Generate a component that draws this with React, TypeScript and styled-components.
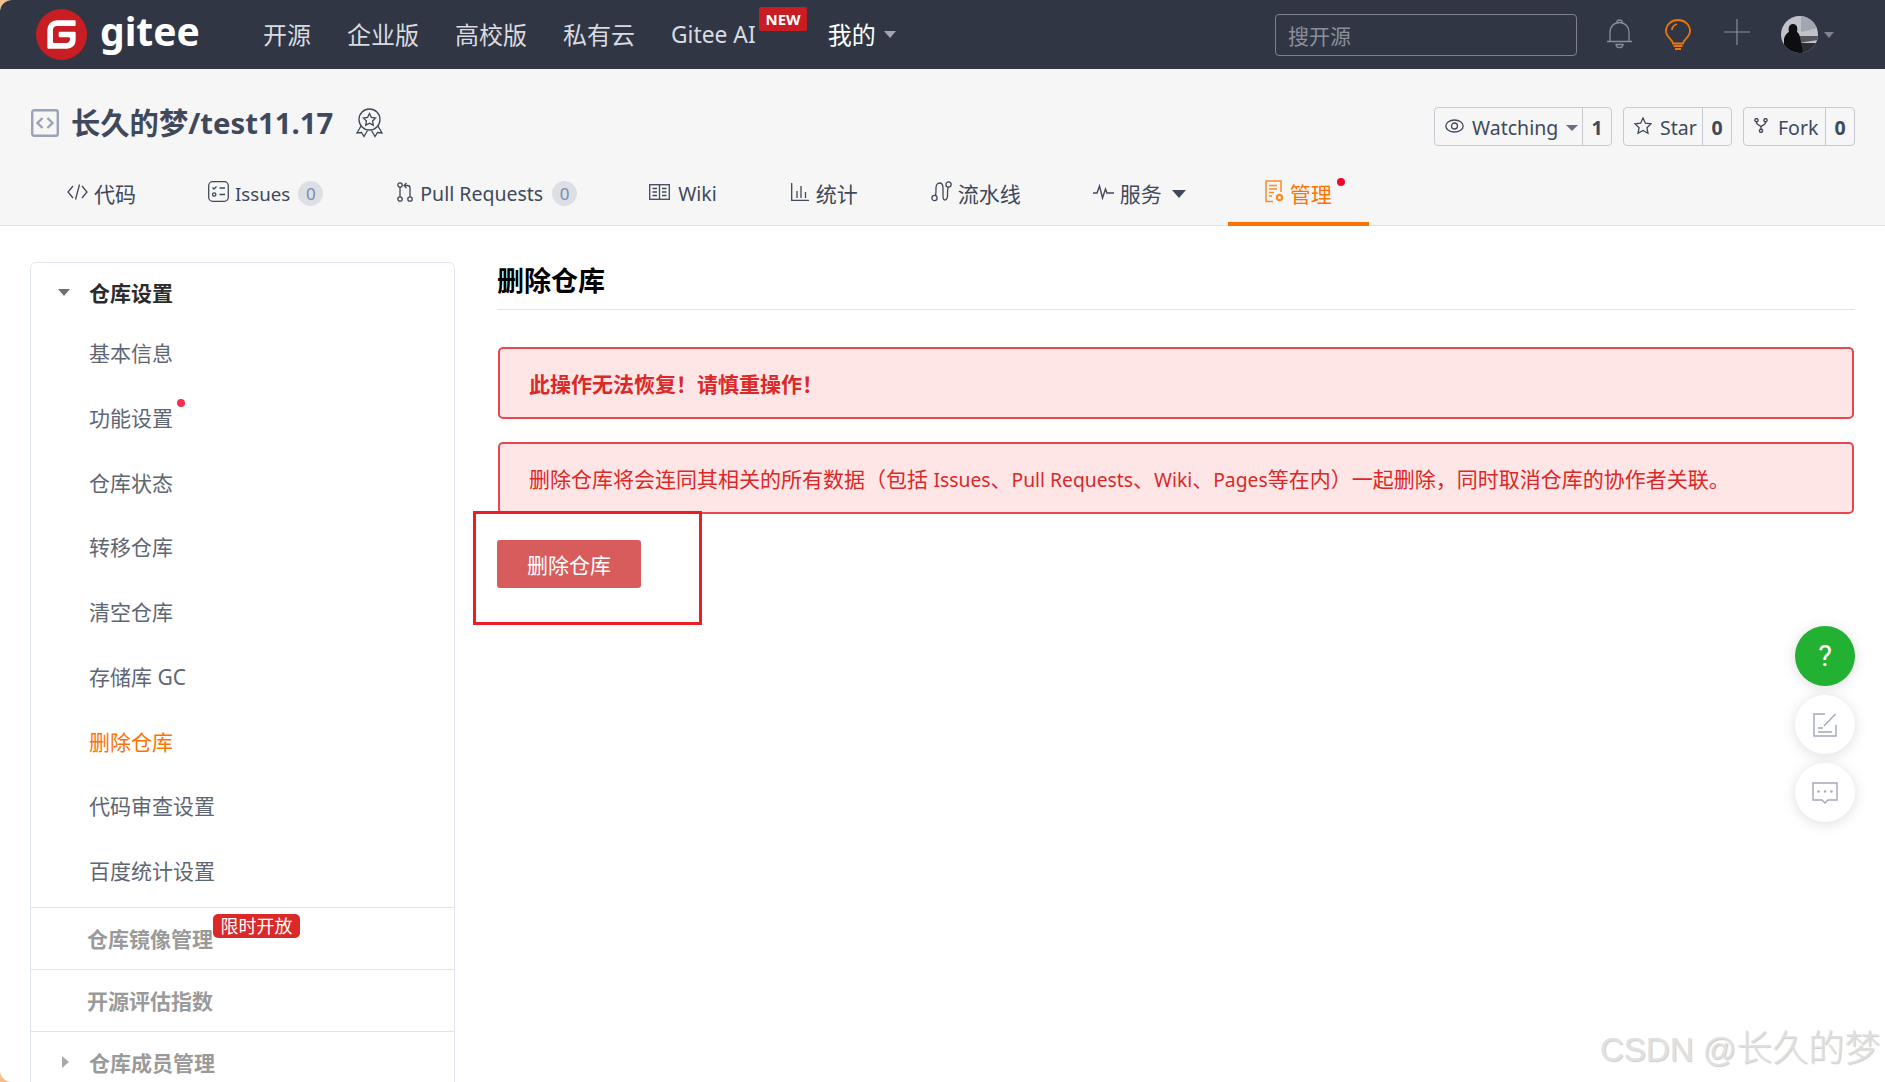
import React from "react";
import styled, { createGlobalStyle } from "styled-components";

const GlobalStyle = createGlobalStyle`
  html, body {
    margin: 0;
    padding: 0;
    background: #f2c08d;
  }
  * { box-sizing: border-box; }
`;

const Page = styled.div`
  position: relative;
  width: 1885px;
  height: 1082px;
  overflow: hidden;
  background: #fff;
  border-radius: 12px 0 0 12px;
  font-family: "Noto Sans", "Noto Sans CJK SC", sans-serif;
  font-size: 21px;
`;

const TopBar = styled.header`
  display: flex;
  align-items: center;
  height: 69px;
  padding: 0 51px 0 36px;
  background: #303644;
`;

const Logo = styled.a`
  display: flex;
  flex: none;
  align-items: center;
  gap: 13px;
  width: 161px;
  height: 51px;
  color: #fff;
  font-family: "Noto Sans", sans-serif;
  font-weight: 700;
  font-size: 39px;
  line-height: 40px;
  svg { flex: none; }
  span { margin-top: -8px; }
`;

const Nav = styled.nav`
  display: flex;
  align-items: center;
  gap: 36px;
  margin-left: 66px;
`;

const NavItem = styled.a<{ $me?: boolean; $latin?: boolean }>`
  position: relative;
  display: flex;
  align-items: center;
  gap: 8px;
  margin-left: ${(p) => (p.$me ? "36px" : "0")};
  color: ${(p) => (p.$me ? "#fff" : "#d9dbe0")};
  font-size: ${(p) => (p.$latin ? "22.8px" : "24px")};
  line-height: 34px;
`;

const NewBadge = styled.b`
  position: absolute;
  left: 88px;
  top: -11px;
  width: 48px;
  height: 24px;
  background: #c71d23;
  border-radius: 2px;
  color: #fff;
  font-size: 15px;
  line-height: 24px;
  text-align: center;
`;

const Caret = styled.i<{ $w: number; $h: number; $color: string }>`
  display: block;
  flex: none;
  border-style: solid;
  border-width: ${(p) => `${p.$h}px ${p.$w / 2}px 0`};
  border-color: ${(p) => p.$color} transparent transparent;
`;

const SideCaret = styled.i`
  display: block;
  flex: none;
  margin-left: 1px;
  border-style: solid;
  border-width: 6px 0 6px 7px;
  border-color: transparent transparent transparent #a8a8a8;
`;

const TopRight = styled.div`
  display: flex;
  align-items: center;
  margin-left: auto;
`;

const Search = styled.div`
  display: flex;
  align-items: center;
  width: 302px;
  height: 42px;
  padding-left: 12px;
  border: 1px solid #7d828e;
  border-radius: 4px;
  color: #8b8f9a;
  font-size: 21px;
`;

const BarIcon = styled.a<{ $left: number }>`
  display: block;
  flex: none;
  height: 31px;
  margin-left: ${(p) => p.$left}px;
  svg { display: block; }
`;

const AvatarWrap = styled.a`
  display: flex;
  align-items: center;
  gap: 6px;
  margin-left: 31px;
`;

const RepoHead = styled.section`
  height: 157px;
  padding-top: 38px;
  background: #f6f6f6;
  border-bottom: 1px solid #e2e2e2;
`;

const RepoRow = styled.div`
  display: flex;
  align-items: center;
  height: 39px;
  padding: 0 30px 0 31px;
`;

const RepoTitle = styled.h1`
  display: flex;
  align-items: center;
  margin: 0 0 7px;
  color: #40485b;
  font-size: 29.3px;
  font-weight: 700;
  line-height: 40px;
  white-space: nowrap;
`;

const RepoName = styled.span`
  margin: 0 23px 0 12px;
`;

const RepoActions = styled.div`
  display: flex;
  gap: 11px;
  margin-left: auto;
`;

const ActionBox = styled.div<{ $width: number }>`
  display: flex;
  width: ${(p) => p.$width}px;
  height: 39px;
  border: 1px solid #c8c9d3;
  border-radius: 4px;
  color: #40485b;
  font-size: 19.5px;
  line-height: 37px;
`;

const ActionMain = styled.a<{ $gap?: number }>`
  display: flex;
  flex: 1;
  align-items: center;
  padding: 2px 0 0 10px;
  gap: ${(p) => p.$gap ?? 8}px;
`;

const ActionCount = styled.b`
  flex: none;
  width: 29px;
  border-left: 1px solid #c8c9d3;
  line-height: 39px;
  text-align: center;
`;

const Tabs = styled.nav`
  display: flex;
  height: 56px;
  margin-top: 24px;
  padding-left: 31px;
`;

const Tab = styled.a<{ $active?: boolean; $gap?: number; $right?: number }>`
  position: relative;
  display: flex;
  align-items: center;
  gap: ${(p) => p.$gap ?? 6}px;
  height: 56px;
  padding: 0 ${(p) => p.$right ?? 36}px 5px ${(p) => (p.$active ? 37 : 36)}px;
  margin-left: ${(p) => (p.$active ? "6px" : "0")};
  border-bottom: 4px solid ${(p) => (p.$active ? "#fe7300" : "transparent")};
  color: ${(p) => (p.$active ? "#fe7300" : "#40485b")};
  line-height: 30px;
  white-space: nowrap;
  svg { flex: none; margin-bottom: 4px; }
  i { margin-left: 4px; }
`;

const TabText = styled.span<{ $size?: number }>`
  font-size: ${(p) => p.$size ?? 21}px;
`;

const CountBadge = styled.span`
  width: 25px;
  height: 25px;
  margin-left: 2px;
  border-radius: 50%;
  background: #dcdfe4;
  color: #7a8bb0;
  font-size: 17px;
  line-height: 25px;
  text-align: center;
`;

const NoticeDot = styled.em`
  position: absolute;
  width: 8px;
  height: 8px;
  border-radius: 50%;
  background: #f5304f;
`;

const TabDot = styled(NoticeDot)`
  right: 24px;
  top: 8px;
  background: #ee0a2b;
`;

const Body = styled.div`
  display: flex;
  align-items: flex-start;
  padding: 36px 30px 0;
`;

const Sidebar = styled.aside`
  flex: none;
  width: 425px;
  height: 830px;
  border: 1px solid #e1e7ee;
  border-radius: 6px;
`;

const SideHead = styled.div`
  display: flex;
  align-items: center;
  height: 58px;
  padding-left: 27px;
  gap: 19px;
  color: #2b2b2b;
  font-weight: 700;
`;

const SideItem = styled.a<{ $active?: boolean }>`
  position: relative;
  display: block;
  height: 64.75px;
  padding-left: 58px;
  color: ${(p) => (p.$active ? "#fe7300" : "#5e6673")};
  line-height: 64.75px;
`;

const ItemDot = styled(NoticeDot)`
  left: 146px;
  top: 13px;
`;

const SideList = styled.div`
  padding-bottom: 3px;
`;

const SideSection = styled.a<{ $left: number }>`
  position: relative;
  display: flex;
  align-items: center;
  gap: 20px;
  height: 62px;
  padding-left: ${(p) => p.$left}px;
  border-top: 1px solid #e1e4ea;
  color: #9a9a9a;
  font-weight: 700;
`;

const LimitedBadge = styled.span`
  position: absolute;
  left: 182px;
  top: 6px;
  width: 87px;
  height: 24px;
  background: #db2828;
  border-radius: 5px;
  color: #fff;
  font-size: 18px;
  font-weight: 400;
  line-height: 24px;
  text-align: center;
`;

const Main = styled.main`
  flex: none;
  width: 1358px;
  margin-left: 42px;
`;

const Heading = styled.h2`
  margin: 0;
  height: 48px;
  padding-bottom: 9px;
  border-bottom: 1px solid #e4e4e4;
  color: #000;
  font-size: 27px;
  font-weight: 700;
  line-height: 38px;
`;

const Alert = styled.div<{ $strong?: boolean }>`
  height: 72px;
  margin: ${(p) => (p.$strong ? "37px 1px 23px" : "0 1px")};
  padding-left: 29px;
  border: 2px solid #e8474e;
  border-radius: 5px;
  background: #ffe6e6;
  color: #db2828;
  font-weight: ${(p) => (p.$strong ? 700 : 400)};
  line-height: 70px;
  white-space: nowrap;
`;

const Latin = styled.span`
  font-size: 19.3px;
`;

const ButtonRow = styled.div`
  position: relative;
  width: 144px;
  margin-top: 26px;
`;

const DangerButton = styled.button`
  display: block;
  width: 144px;
  height: 48px;
  padding: 0;
  border: 0;
  border-radius: 3px;
  background: #d95c5c;
  color: #fff;
  font-family: inherit;
  font-size: 21px;
`;

const Annotation = styled.div`
  position: absolute;
  left: -24px;
  top: -29px;
  width: 229px;
  height: 114px;
  border: 3px solid #ee1c25;
`;

const FloatDock = styled.div`
  position: absolute;
  left: 1795px;
  top: 626px;
  display: flex;
  flex-direction: column;
  gap: 9px;
`;

const FloatButton = styled.a<{ $green?: boolean }>`
  display: flex;
  align-items: center;
  justify-content: center;
  width: 60px;
  height: ${(p) => (p.$green ? "60px" : "59px")};
  border-radius: 50%;
  background: ${(p) => (p.$green ? "#22b133" : "#fff")};
  box-shadow: 0 2px 14px rgba(0, 0, 0, 0.13);
  color: #fff;
  font-family: "Roboto", sans-serif;
  font-size: 29px;
  font-weight: 400;
`;

const Watermark = styled.div`
  position: absolute;
  left: 1600px;
  top: 1025px;
  color: #e0e0e0;
  font-family: "Liberation Sans", "Noto Sans CJK SC", sans-serif;
  font-size: 33px;
  line-height: 48px;
  text-shadow: 1px 1px 1px #cccccc;
  white-space: nowrap;
  span { font-size: 36px; font-weight: 300; }
`;

const LogoMark = () => (
  <svg width="51" height="51" viewBox="0 0 24 24">
    <circle cx="12" cy="12" r="11" fill="#fff" />
    <path
      fill="#c71d23"
      fillRule="evenodd"
      d="M12 0a12 12 0 1 0 0 24 12 12 0 0 0 0-24zm6.07 5.33c.33 0 .6.27.6.6v1.48c0 .33-.27.59-.6.59H9.78c-.98 0-1.78.8-1.78 1.78v5.63c0 .33.27.59.59.59h5.63c.98 0 1.78-.8 1.78-1.78v-.3a.59.59 0 0 0-.59-.59h-4.15a.59.59 0 0 1-.59-.59v-1.48c0-.33.27-.59.59-.59h6.82c.33 0 .59.26.59.59v3.41a4 4 0 0 1-4 4H5.93a.59.59 0 0 1-.59-.59V9.78a4.44 4.44 0 0 1 4.44-4.44h8.29z"
    />
  </svg>
);

const BellIcon = () => (
  <svg width="25" height="31" viewBox="0 0 25 31" fill="none" stroke="#8a8f9c" strokeWidth="1.3">
    <path d="M0 22.5h25M3 22.5v-9C3 7.5 7 3.5 12.5 3.5S22 7.5 22 13.5v9" />
    <path d="M10 3.5V2.5c0-2 5-2 5 0v1M9 25.5h7c0 4-7 4-7 0z" />
  </svg>
);

const BulbIcon = () => (
  <svg width="26" height="32" viewBox="0 0 26 32" fill="none" stroke="#f27405" strokeWidth="1.8">
    <path d="M8 24.5c0-4-7-6-7-12.500C1 5.500 6.500 1 13 1s12 4.500 12 11c0 6.500-7 8.500-7 12.500z" />
    <path d="M7 11c0-3 2-5 5-6" />
    <path d="M8.500 27h9M10 30h6" />
  </svg>
);

const PlusIcon = () => (
  <svg width="26" height="26" viewBox="0 0 26 26" stroke="#8a8f9c" strokeWidth="1.2">
    <path d="M0 13h26M13 0v26" />
  </svg>
);

const AvatarImage = () => (
  <svg width="37" height="37" viewBox="0 0 37 37">
    <defs>
      <clipPath id="av">
        <circle cx="18.500" cy="18.500" r="18.500" />
      </clipPath>
    </defs>
    <g clipPath="url(#av)">
      <rect width="37" height="37" fill="#bfc2c8" />
      <path d="M20 0h17v12l-17 4z" fill="#a2a6ae" />
      <path d="M18 20h19v4l-19 3z" fill="#55565a" />
      <path d="M18 27h19v10H18z" fill="#2c2d30" />
      <path d="M3 37V24c0-4 3-7 5-8-1-4 0-8 4-8s5 4 4 8c3 2 3 6 4 10l2 11z" fill="#0e0e10" />
    </g>
  </svg>
);

const RepoIcon = () => (
  <svg width="28" height="28" viewBox="0 0 28 28" fill="none" stroke="#9aa3b5" strokeWidth="2.400">
    <rect x="1.200" y="1.200" width="25.600" height="25.600" rx="2" />
    <path d="M11.500 9l-5 5 5 5M16.500 9l5 5-5 5" />
  </svg>
);

const MedalIcon = () => (
  <svg width="27" height="30" viewBox="0 0 27 30" fill="none" stroke="#40485b" strokeWidth="1.300">
    <circle cx="13.500" cy="11.500" r="10.500" />
    <path d="M13.500 5.500l1.900 3.900 4.200.6-3 3 .7 4.200-3.800-2-3.800 2 .7-4.200-3-3 4.200-.6z" />
    <path d="M5 18l-4 7 4.500-.5 2.500 4 3.500-6M22 18l4 7-4.500-.5-2.500 4-3.500-6" />
  </svg>
);

const EyeIcon = () => (
  <svg width="19" height="14" viewBox="0 0 19 14" fill="none" stroke="#40485b" strokeWidth="1.300" style={{ marginBottom: 3 }}>
    <ellipse cx="9.500" cy="7" rx="8.700" ry="6" />
    <circle cx="9.500" cy="7" r="3" />
  </svg>
);

const StarIcon = () => (
  <svg width="18" height="18" viewBox="0 0 18 18" fill="none" stroke="#40485b" strokeWidth="1.300" style={{ marginBottom: 4 }}>
    <path d="M9 1l2.400 5.200 5.600.7-4.100 3.800 1.100 5.600L9 13.500l-5 2.800 1.100-5.600L1 6.900l5.600-.7z" />
  </svg>
);

const ForkIcon = () => (
  <svg width="14" height="15" viewBox="0 0 14 15" fill="none" stroke="#40485b" strokeWidth="1.400" style={{ marginBottom: 5 }}>
    <circle cx="2.500" cy="2.200" r="1.600" />
    <circle cx="11.500" cy="2.200" r="1.600" />
    <circle cx="7" cy="12.800" r="1.600" />
    <path d="M2.500 3.800v1c0 2.500 4.500 2 4.500 4.500v1.900M11.500 3.800v1c0 2.500-4.500 2-4.500 4.500" />
  </svg>
);

const CodeIcon = () => (
  <svg width="21" height="16" viewBox="0 0 21 16" fill="none" stroke="#40485b" strokeWidth="1.300">
    <path d="M6 2L1 8l5 6M15 2l5 6-5 6M12.500 .5l-4 15" />
  </svg>
);

const IssuesIcon = () => (
  <svg width="21" height="21" viewBox="0 0 21 21" fill="none" stroke="#40485b" strokeWidth="1.300">
    <rect x=".7" y=".7" width="19.600" height="19.600" rx="4" />
    <path d="M4.500 6.500l1.500 1.500 2.500-2.500M11.500 7H17M11.500 13.500H17" />
    <circle cx="6.200" cy="13.500" r="1.700" />
  </svg>
);

const PullIcon = () => (
  <svg width="16" height="20" viewBox="0 0 16 20" fill="none" stroke="#40485b" strokeWidth="1.300">
    <circle cx="3" cy="3" r="2.200" />
    <circle cx="3" cy="17" r="2.200" />
    <circle cx="13" cy="17" r="2.200" />
    <path d="M3 5.200v9.600M13 14.800V6c0-1.500-1-2.500-2.500-2.500H8" />
    <path d="M9.500 1L7 3.500 9.500 6" />
  </svg>
);

const WikiIcon = () => (
  <svg width="21" height="16" viewBox="0 0 21 16" fill="none" stroke="#40485b" strokeWidth="1.300">
    <rect x=".7" y=".7" width="19.600" height="14.600" />
    <path d="M10.500 1v14M3.500 4.500h4.500M3.500 8h4.500M3.500 11.500h4.500M13 4.500h4.500M13 8h4.500M13 11.500h4.500" />
  </svg>
);

const StatsIcon = () => (
  <svg width="18" height="18" viewBox="0 0 18 18" fill="none" stroke="#40485b" strokeWidth="1.300">
    <path d="M.7 0v17.300H18M6 8v7M10 3v12M14.500 9v6" />
  </svg>
);

const PipelineIcon = () => (
  <svg width="21" height="21" viewBox="0 0 21 21" fill="none" stroke="#40485b" strokeWidth="1.300">
    <circle cx="3.500" cy="17" r="2.600" />
    <circle cx="17.500" cy="3.500" r="2.600" />
    <path d="M4.500 14.500C5 13 5 10 5 7c0-3 1.500-5 3.500-5S12 4 12 7v8c0 2.500 1 4 2 4s2.500-1.500 2.500-4c0-3 0-6 .5-9" />
  </svg>
);

const ServiceIcon = () => (
  <svg width="21" height="16" viewBox="0 0 21 16" fill="none" stroke="#40485b" strokeWidth="1.400">
    <path d="M0 9h4l2.500-7 3 12 3-9 1.500 4h7" />
  </svg>
);

const ManageIcon = () => (
  <svg width="19" height="23" viewBox="0 0 19 23" fill="none" stroke="#fe8a2a" strokeWidth="1.500">
    <path d="M8 21.500H1V1h15v11" />
    <path d="M4 5.500h8M4 9h8M4 12.500h5M4 16h3" />
    <circle cx="14.500" cy="17.500" r="2.600" strokeWidth="2.200" />
  </svg>
);

const EditIcon = () => (
  <svg width="24" height="24" viewBox="0 0 24 24" fill="none" stroke="#a1a6bb" strokeWidth="1.400">
    <path d="M12 1H1v22h22V12" />
    <path d="M11 13L22.500 1M5 15h5M5 19h14" />
  </svg>
);

const MessageIcon = () => (
  <svg width="26" height="22" viewBox="0 0 26 22" fill="none" stroke="#a1a6bb" strokeWidth="1.400">
    <path d="M1 1h24v17h-9l-3 3-3-3H1z" />
    <circle cx="6.500" cy="9.500" r="1.200" fill="#a1a6bb" stroke="none" />
    <circle cx="13" cy="9.500" r="1.200" fill="#a1a6bb" stroke="none" />
    <circle cx="19.500" cy="9.500" r="1.200" fill="#a1a6bb" stroke="none" />
  </svg>
);

const settingItems = ["基本信息", "功能设置", "仓库状态", "转移仓库", "清空仓库", "存储库 GC", "删除仓库", "代码审查设置", "百度统计设置"];

const App = () => (
  <Page>
    <GlobalStyle />
    <TopBar>
      <Logo>
        <LogoMark />
        <span>gitee</span>
      </Logo>
      <Nav>
        <NavItem>开源</NavItem>
        <NavItem>企业版</NavItem>
        <NavItem>高校版</NavItem>
        <NavItem>私有云</NavItem>
        <NavItem $latin>
          Gitee AI
          <NewBadge>NEW</NewBadge>
        </NavItem>
        <NavItem $me>
          我的
          <Caret $w={13} $h={7} $color="#a3a6ae" />
        </NavItem>
      </Nav>
      <TopRight>
        <Search>搜开源</Search>
        <BarIcon $left={30}><BellIcon /></BarIcon>
        <BarIcon $left={33}><BulbIcon /></BarIcon>
        <BarIcon $left={33}><PlusIcon /></BarIcon>
        <AvatarWrap>
          <AvatarImage />
          <Caret $w={11} $h={6} $color="#7f838e" />
        </AvatarWrap>
      </TopRight>
    </TopBar>

    <RepoHead>
      <RepoRow>
        <RepoTitle>
          <RepoIcon />
          <RepoName>长久的梦/test11.17</RepoName>
          <MedalIcon />
        </RepoTitle>
        <RepoActions>
          <ActionBox $width={178}>
            <ActionMain>
              <EyeIcon />
              Watching
              <Caret $w={12} $h={6} $color="#6b7080" />
            </ActionMain>
            <ActionCount>1</ActionCount>
          </ActionBox>
          <ActionBox $width={109}>
            <ActionMain>
              <StarIcon />
              Star
            </ActionMain>
            <ActionCount>0</ActionCount>
          </ActionBox>
          <ActionBox $width={112}>
            <ActionMain $gap={10}>
              <ForkIcon />
              Fork
            </ActionMain>
            <ActionCount>0</ActionCount>
          </ActionBox>
        </RepoActions>
      </RepoRow>
      <Tabs>
        <Tab><CodeIcon /><TabText>代码</TabText></Tab>
        <Tab $right={38}><IssuesIcon /><TabText $size={18.7}>Issues</TabText><CountBadge>0</CountBadge></Tab>
        <Tab $gap={7}><PullIcon /><TabText $size={19.5}>Pull Requests</TabText><CountBadge>0</CountBadge></Tab>
        <Tab $gap={8} $right={38}><WikiIcon /><TabText $size={19.5}>Wiki</TabText></Tab>
        <Tab $gap={7} $right={37}><StatsIcon /><TabText>统计</TabText></Tab>
        <Tab><PipelineIcon /><TabText>流水线</TabText></Tab>
        <Tab><ServiceIcon /><TabText>服务</TabText><Caret $w={14} $h={8} $color="#40485b" /></Tab>
        <Tab $active $right={37}><ManageIcon /><TabText>管理</TabText><TabDot /></Tab>
      </Tabs>
    </RepoHead>

    <Body>
      <Sidebar>
        <SideHead>
          <Caret $w={13} $h={7} $color="#6f6f6f" />
          仓库设置
        </SideHead>
        <SideList>
          {settingItems.map((item) => (
            <SideItem key={item} $active={item === "删除仓库"}>
              {item}
              {item === "功能设置" && <ItemDot />}
            </SideItem>
          ))}
        </SideList>
        <SideSection $left={56}>
          仓库镜像管理
          <LimitedBadge>限时开放</LimitedBadge>
        </SideSection>
        <SideSection $left={56}>开源评估指数</SideSection>
        <SideSection $left={30}>
          <SideCaret />
          仓库成员管理
        </SideSection>
      </Sidebar>

      <Main>
        <Heading>删除仓库</Heading>
        <Alert $strong>此操作无法恢复！请慎重操作！</Alert>
        <Alert>
          删除仓库将会连同其相关的所有数据（包括 <Latin>Issues</Latin>、<Latin>Pull Requests</Latin>、<Latin>Wiki</Latin>、<Latin>Pages</Latin>等在内）一起删除，同时取消仓库的协作者关联。
        </Alert>
        <ButtonRow>
          <DangerButton>删除仓库</DangerButton>
          <Annotation />
        </ButtonRow>
      </Main>
    </Body>

    <FloatDock>
      <FloatButton $green>?</FloatButton>
      <FloatButton><EditIcon /></FloatButton>
      <FloatButton><MessageIcon /></FloatButton>
    </FloatDock>
    <Watermark>CSDN @<span>长久的梦</span></Watermark>
  </Page>
);

export default App;
